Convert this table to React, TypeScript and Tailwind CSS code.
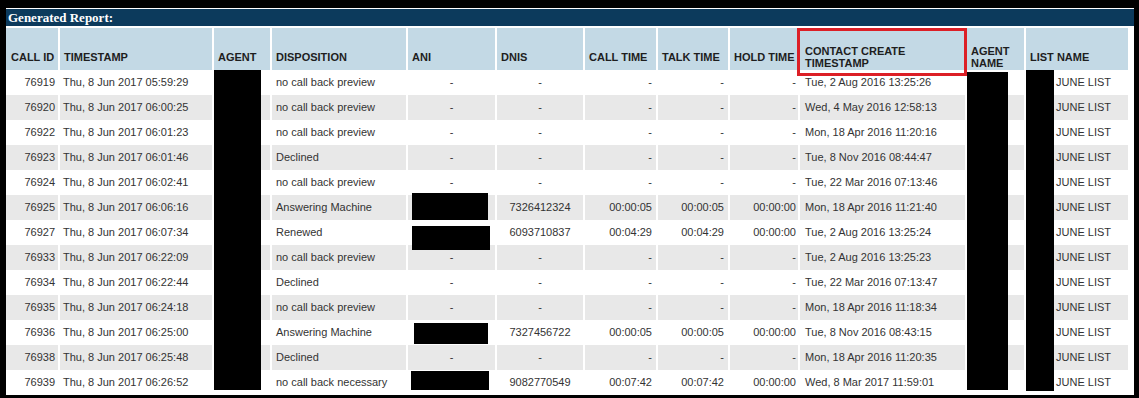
import React from "react";

const COLS =
  "grid grid-cols-[52px_152px_56px_134px_87px_86px_71px_70px_68px_165px_57px_102px] gap-x-[2px]";

type Row = {
  id: string;
  ts: string;
  disp: string;
  dnis: string;
  call: string;
  talk: string;
  hold: string;
  created: string;
};

const rows: Row[] = [
  { id: "76919", ts: "Thu, 8 Jun 2017 05:59:29", disp: "no call back preview", dnis: "-", call: "-", talk: "-", hold: "-", created: "Tue, 2 Aug 2016 13:25:26" },
  { id: "76920", ts: "Thu, 8 Jun 2017 06:00:25", disp: "no call back preview", dnis: "-", call: "-", talk: "-", hold: "-", created: "Wed, 4 May 2016 12:58:13" },
  { id: "76922", ts: "Thu, 8 Jun 2017 06:01:23", disp: "no call back preview", dnis: "-", call: "-", talk: "-", hold: "-", created: "Mon, 18 Apr 2016 11:20:16" },
  { id: "76923", ts: "Thu, 8 Jun 2017 06:01:46", disp: "Declined", dnis: "-", call: "-", talk: "-", hold: "-", created: "Tue, 8 Nov 2016 08:44:47" },
  { id: "76924", ts: "Thu, 8 Jun 2017 06:02:41", disp: "no call back preview", dnis: "-", call: "-", talk: "-", hold: "-", created: "Tue, 22 Mar 2016 07:13:46" },
  { id: "76925", ts: "Thu, 8 Jun 2017 06:06:16", disp: "Answering Machine", dnis: "7326412324", call: "00:00:05", talk: "00:00:05", hold: "00:00:00", created: "Mon, 18 Apr 2016 11:21:40" },
  { id: "76927", ts: "Thu, 8 Jun 2017 06:07:34", disp: "Renewed", dnis: "6093710837", call: "00:04:29", talk: "00:04:29", hold: "00:00:00", created: "Tue, 2 Aug 2016 13:25:24" },
  { id: "76933", ts: "Thu, 8 Jun 2017 06:22:09", disp: "no call back preview", dnis: "-", call: "-", talk: "-", hold: "-", created: "Tue, 2 Aug 2016 13:25:23" },
  { id: "76934", ts: "Thu, 8 Jun 2017 06:22:44", disp: "Declined", dnis: "-", call: "-", talk: "-", hold: "-", created: "Tue, 22 Mar 2016 07:13:47" },
  { id: "76935", ts: "Thu, 8 Jun 2017 06:24:18", disp: "no call back preview", dnis: "-", call: "-", talk: "-", hold: "-", created: "Mon, 18 Apr 2016 11:18:34" },
  { id: "76936", ts: "Thu, 8 Jun 2017 06:25:00", disp: "Answering Machine", dnis: "7327456722", call: "00:00:05", talk: "00:00:05", hold: "00:00:00", created: "Tue, 8 Nov 2016 08:43:15" },
  { id: "76938", ts: "Thu, 8 Jun 2017 06:25:48", disp: "Declined", dnis: "-", call: "-", talk: "-", hold: "-", created: "Mon, 18 Apr 2016 11:20:35" },
  { id: "76939", ts: "Thu, 8 Jun 2017 06:26:52", disp: "no call back necessary", dnis: "9082770549", call: "00:07:42", talk: "00:07:42", hold: "00:00:00", created: "Wed, 8 Mar 2017 11:59:01" },
];

function H({ children, className = "" }: { children?: React.ReactNode; className?: string }) {
  return (
    <div className={`bg-[#c3d9e5] flex items-center pt-[16px] pl-[4px] leading-[12px] ${className}`}>
      <span>{children}</span>
    </div>
  );
}

export default function App() {
  return (
    <div className="w-[1139px] h-[398px] bg-black pt-[8px] pl-[6px] overflow-hidden">
      <div
        className="relative w-[1128px] h-[387px] bg-white pt-[1px]"
        style={{ fontFamily: '"Liberation Sans", Arial, sans-serif' }}
      >
        <div
          className="h-[17px] bg-[#0c3a5c] text-white font-bold text-[13px] leading-[17px] pl-[2px]"
          style={{ fontFamily: '"Liberation Serif", "Times New Roman", serif' }}
        >
          Generated Report:
        </div>

        <div className={`${COLS} mt-[2px] h-[42px] w-[1122px] text-[11px] font-bold text-[#1e1e1e]`}>
          <H className="pl-[5px]">CALL ID</H>
          <H className="pl-[3px]">TIMESTAMP</H>
          <H className="pl-[3px]">AGENT</H>
          <H>DISPOSITION</H>
          <H>ANI</H>
          <H className="pl-[3px]">DNIS</H>
          <H>CALL TIME</H>
          <H className="pl-[3px]">TALK TIME</H>
          <H className="pl-[3px]">HOLD TIME</H>
          <H className="pl-[5px]">
            CONTACT CREATE
            <br />
            TIMESTAMP
          </H>
          <H className="pl-[3px]">
            AGENT
            <br />
            NAME
          </H>
          <H className="pl-[3px]">LIST NAME</H>
        </div>

        <div className="w-[1122px] text-[11px] text-[#333]">
          {rows.map((r, i) => {
            const bg = i % 2 === 1 ? "bg-[#e8e8e8]" : "bg-white";
            const c = `${bg} h-[25px] flex items-center`;
            return (
              <div key={r.id} className={COLS}>
                <div className={`${c} justify-end pr-[3px]`}>{r.id}</div>
                <div className={`${c} pl-[3px]`}>{r.ts}</div>
                <div className={c}></div>
                <div className={`${c} pl-[4px]`}>{r.disp}</div>
                <div className={`${c} justify-center`}>{r.dnis === "-" ? "-" : ""}</div>
                <div className={`${c} justify-center`}>{r.dnis}</div>
                <div className={`${c} justify-end pr-[4px]`}>{r.call}</div>
                <div className={`${c} justify-end pr-[4px]`}>{r.talk}</div>
                <div className={`${c} justify-end pr-[2px]`}>{r.hold}</div>
                <div className={`${c} pl-[5px]`}>{r.created}</div>
                <div className={c}></div>
                <div className={`${c} pl-[30px]`}>JUNE LIST</div>
              </div>
            );
          })}
        </div>

        {/* redactions */}
        <div className="absolute left-[208px] top-[62px] w-[47px] h-[320px] bg-black" />
        <div className="absolute left-[961px] top-[64px] w-[41px] h-[318px] bg-black" />
        <div className="absolute left-[1020px] top-[62px] w-[28px] h-[321px] bg-black" />
        <div className="absolute left-[406px] top-[185px] w-[76px] h-[27px] bg-black" />
        <div className="absolute left-[406px] top-[218px] w-[78px] h-[24px] bg-black" />
        <div className="absolute left-[408px] top-[315px] w-[74px] h-[21px] bg-black" />
        <div className="absolute left-[405px] top-[363px] w-[78px] h-[19px] bg-black" />

        {/* highlight box */}
        <div className="absolute left-[791px] top-[20px] w-[170px] h-[48px] border-[3px] border-[#dc1f26]" />
      </div>
    </div>
  );
}
